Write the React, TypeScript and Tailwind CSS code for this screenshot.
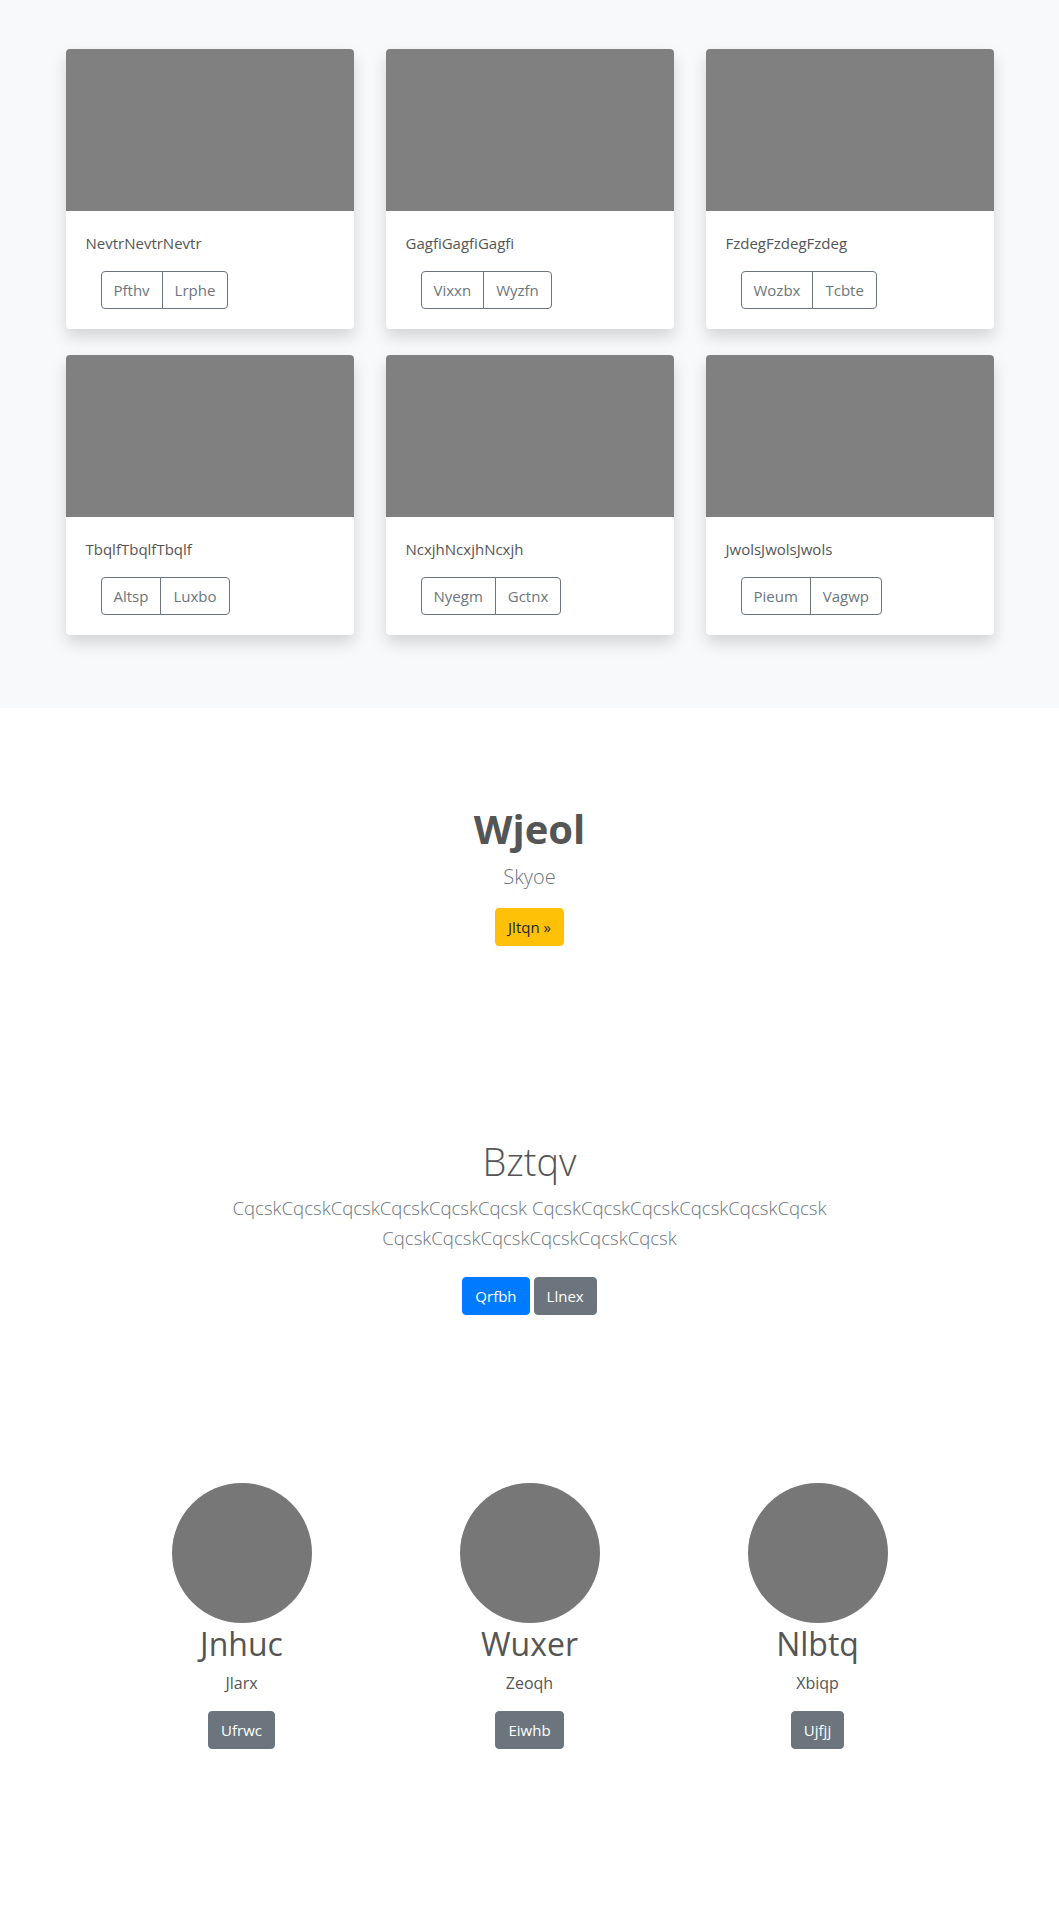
const cards = [
  { title: "NevtrNevtrNevtr", a: "Pfthv", b: "Lrphe" },
  { title: "GagfiGagfiGagfi", a: "Vixxn", b: "Wyzfn" },
  { title: "FzdegFzdegFzdeg", a: "Wozbx", b: "Tcbte" },
  { title: "TbqlfTbqlfTbqlf", a: "Altsp", b: "Luxbo" },
  { title: "NcxjhNcxjhNcxjh", a: "Nyegm", b: "Gctnx" },
  { title: "JwolsJwolsJwols", a: "Pieum", b: "Vagwp" },
];

const people = [
  { name: "Jnhuc", role: "Jlarx", action: "Ufrwc" },
  { name: "Wuxer", role: "Zeoqh", action: "Eiwhb" },
  { name: "Nlbtq", role: "Xbiqp", action: "Ujfjj" },
];

export default function App() {
  return (
    <div className="bg-white font-['Open_Sans',sans-serif] text-[#555]">
      {/* album */}
      <section className="bg-[#f8f9fa] pt-[49px] pb-[73px]">
        <div className="mx-auto grid w-[928px] grid-cols-3 gap-x-8 gap-y-[26px]">
          {cards.map((c) => (
            <div
              key={c.title}
              className="overflow-hidden rounded bg-white shadow-[0_8px_16px_rgba(0,0,0,0.15)]"
            >
              <div className="h-[162px] bg-[#808080]" />
              <div className="p-5">
                <p className="mb-4 text-[15px] leading-6 text-[#555]">{c.title}</p>
                <div className="ml-[15px] inline-flex">
                  <button className="rounded-l border border-[#6c757d] px-3 py-[6px] text-[15px] leading-6 text-[#6c757d]">
                    {c.a}
                  </button>
                  <button className="-ml-px rounded-r border border-[#6c757d] px-3 py-[6px] text-[15px] leading-6 text-[#6c757d]">
                    {c.b}
                  </button>
                </div>
              </div>
            </div>
          ))}
        </div>
      </section>

      {/* jumbotron */}
      <section className="pt-[97px] text-center">
        <h1 className="mb-[9px] text-[40px] font-bold leading-[1.2] text-[#555]">Wjeol</h1>
        <p className="text-[20px] font-light leading-[30px] text-[#6c757d]">Skyoe</p>
        <button className="mt-4 rounded border border-[#ffc107] bg-[#ffc107] px-3 py-[6px] text-[15px] leading-6 text-[#212529]">
          Jltqn »
        </button>
      </section>

      {/* call to action */}
      <section className="pt-[193px] text-center">
        <h2 className="mb-2 text-[38px] font-light leading-[1.2] text-[#555]">Bztqv</h2>
        <p className="mx-auto mb-6 max-w-[680px] text-[18.6px] font-light leading-[30px] text-[#6c757d]">
          CqcskCqcskCqcskCqcskCqcskCqcsk CqcskCqcskCqcskCqcskCqcskCqcsk
          CqcskCqcskCqcskCqcskCqcskCqcsk
        </p>
        <div className="flex justify-center gap-1">
          <button className="rounded border border-[#007bff] bg-[#007bff] px-3 py-[6px] text-[15px] leading-6 text-white">
            Qrfbh
          </button>
          <button className="rounded border border-[#6c757d] bg-[#6c757d] px-3 py-[6px] text-[15px] leading-6 text-white">
            Llnex
          </button>
        </div>
      </section>

      {/* team */}
      <section className="pt-[168px] pb-[164px]">
        <div className="mx-auto grid w-[864px] grid-cols-3">
          {people.map((p) => (
            <div key={p.name} className="flex flex-col items-center text-center">
              <div className="h-[140px] w-[140px] rounded-full bg-[#777]" />
              <h3 className="mt-[2px] mb-2 text-[32px] font-normal leading-[1.2] text-[#555]">{p.name}</h3>
              <p className="text-[16px] leading-6 text-[#555]">{p.role}</p>
              <button className="mt-4 rounded border border-[#6c757d] bg-[#6c757d] px-3 py-[6px] text-[15px] leading-6 text-white">
                {p.action}
              </button>
            </div>
          ))}
        </div>
      </section>
    </div>
  );
}
